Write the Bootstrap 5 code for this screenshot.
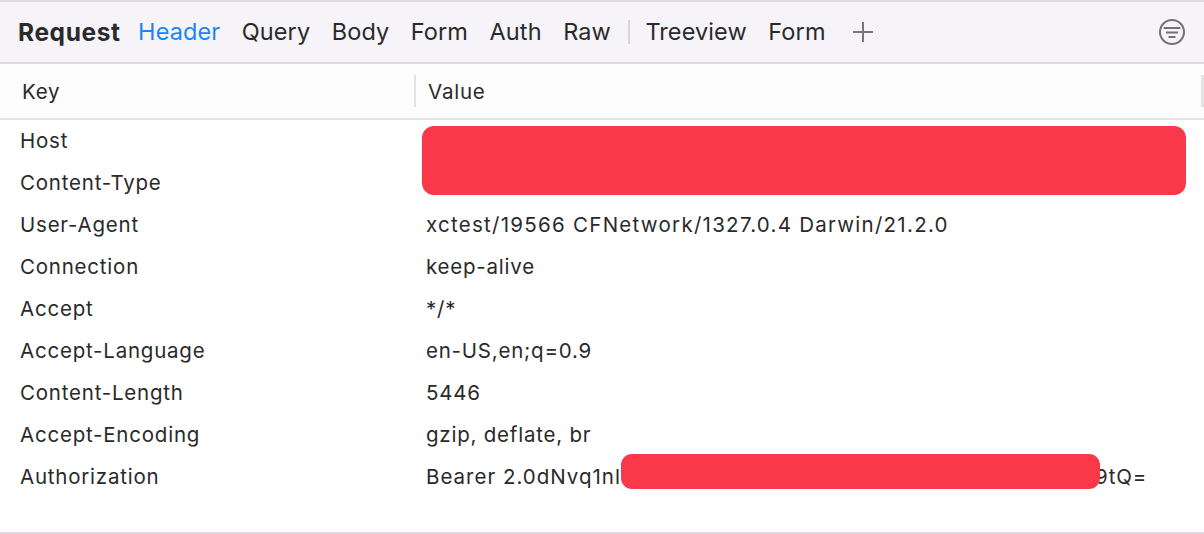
<!DOCTYPE html>
<html lang="en">
<head>
<meta charset="utf-8">
<title>Request</title>
<link rel="stylesheet" href="https://cdn.jsdelivr.net/npm/bootstrap@5.3.0/dist/css/bootstrap.min.css">
<style>
html,body{height:534px;overflow:hidden;background:#fff}
body{font-family:"Inter","Liberation Sans",sans-serif;color:#2a2a2a;-webkit-font-smoothing:antialiased}
.pane{width:1204px;height:534px;border-top:2px solid #dedcdf;border-bottom:2px solid #dedcdf;position:relative}
.tbar{height:62px;background:#f6f4f8;border-bottom:2px solid #dbd9dd;padding:0 19px 0 18px}
.ttl{font-size:24.5px;font-weight:700;margin-right:17.500px;letter-spacing:.6px;line-height:1}
.tab{font-size:23.5px;margin-right:21.500px;line-height:1;font-weight:400;letter-spacing:.1px}
.tab-on{color:#1a86f5}
.vsep{width:2px;height:24px;background:#d9d7db;margin:0 15px 0 -4px}
.plus{margin-left:4.500px}
.thead{height:56px;background:#fdfdfd;border-bottom:2px solid #e3e3e3;font-size:20.5px;letter-spacing:.78px}
.kcol{width:414px;padding-left:22px;padding-top:3px}
.vcol{padding-left:12px;border-left:2px solid #e3e3e3;height:32px;padding-top:3px}
.hend{width:3px;height:32px;background:#e3e3e3;margin-left:auto}
.rowline{height:42px;font-size:20.5px;padding-left:20px;position:relative;line-height:1;letter-spacing:.78px}
.rk{width:406px;flex:none}
.uastr{letter-spacing:1.27px}
.tokenhead{letter-spacing:1px}
.gapfill{width:474px;flex:none}
.blot{position:absolute;background:#f9384a}
.blot-a{left:422px;top:126px;width:764px;height:69px;border-radius:12px}
.blot-b{left:621px;top:-2px;width:479px;height:35px;border-radius:11px}
</style>
</head>
<body>
<div class="pane">
  <div class="tbar d-flex align-items-center">
    <span class="ttl">Request</span>
    <span class="tab tab-on">Header</span>
    <span class="tab">Query</span>
    <span class="tab">Body</span>
    <span class="tab">Form</span>
    <span class="tab">Auth</span>
    <span class="tab">Raw</span>
    <span class="vsep"></span>
    <span class="tab">Treeview</span>
    <span class="tab">Form</span>
    <svg class="plus" width="22" height="22" viewBox="0 0 22 22" fill="none" stroke="#77767a" stroke-width="2"><path d="M11 1V21M1 11H21"/></svg>
    <svg class="ms-auto" width="26" height="26" viewBox="0 0 26 26" fill="none" stroke="#717074" stroke-width="2"><circle cx="13" cy="13" r="12"/><path d="M4.700 9H21.300M7 13.500H19M9.500 18H16.500"/></svg>
  </div>
  <div class="thead d-flex align-items-center">
    <div class="kcol">Key</div>
    <div class="vcol d-flex align-items-center">Value</div>
    <div class="hend"></div>
  </div>
  <div class="rowline d-flex align-items-center"><span class="rk">Host</span></div>
  <div class="rowline d-flex align-items-center"><span class="rk">Content-Type</span></div>
  <div class="rowline d-flex align-items-center"><span class="rk">User-Agent</span><span class="uastr">xctest/19566 CFNetwork/1327.0.4 Darwin/21.2.0</span></div>
  <div class="rowline d-flex align-items-center"><span class="rk">Connection</span><span>keep-alive</span></div>
  <div class="rowline d-flex align-items-center"><span class="rk">Accept</span><span>*/*</span></div>
  <div class="rowline d-flex align-items-center"><span class="rk">Accept-Language</span><span>en-US,en;q=0.9</span></div>
  <div class="rowline d-flex align-items-center"><span class="rk">Content-Length</span><span>5446</span></div>
  <div class="rowline d-flex align-items-center"><span class="rk">Accept-Encoding</span><span>gzip, deflate, br</span></div>
  <div class="rowline d-flex align-items-center"><span class="rk">Authorization</span><span class="tokenhead">Bearer 2.0dNvq1nl</span><span class="gapfill"></span><span>9tQ=</span><span class="blot blot-b"></span></div>
</div>
<div class="blot blot-a"></div>
</body>
</html>
